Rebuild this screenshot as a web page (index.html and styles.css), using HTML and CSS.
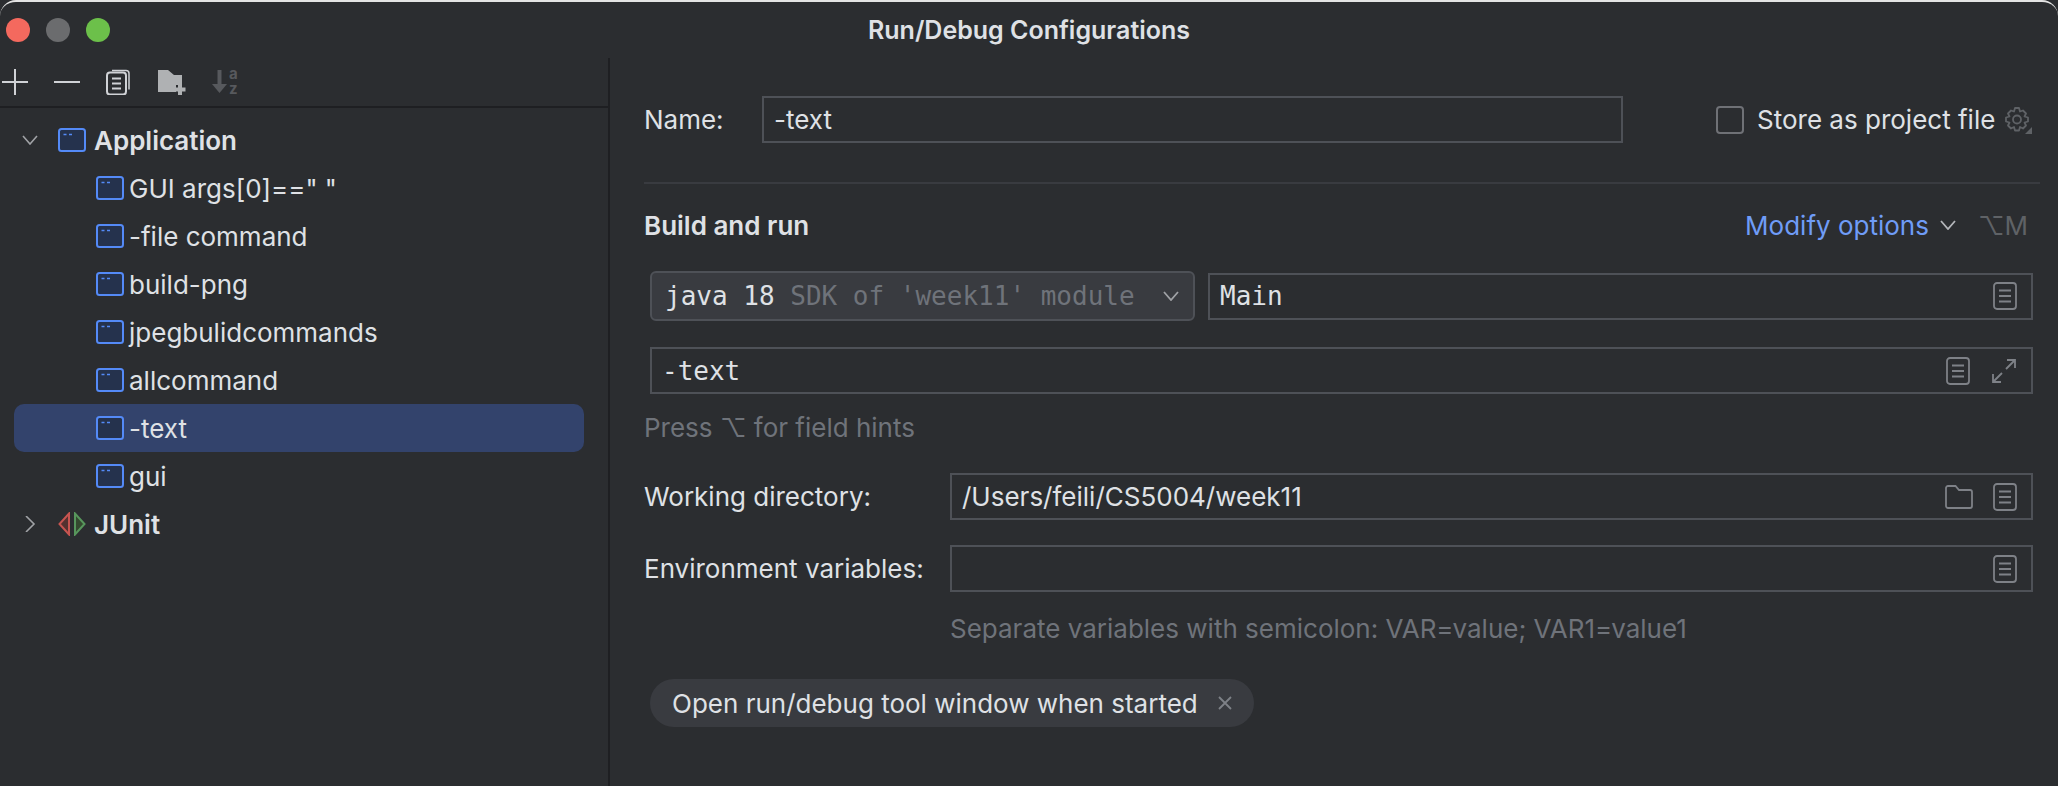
FILE: index.html
```html
<!DOCTYPE html>
<html lang="en">
    <head>
        <title>Run/Debug Configurations</title>
        <link rel="stylesheet" href="styles.css">
    </head>

    <body>
        <svg class="defs" width="0" height="0">
            <symbol id="app" viewBox="0 0 28 24">
                <rect x="1" y="1" width="26" height="22" rx="2.5" fill="#25324d" stroke="#548af7" stroke-width="2"/>
                <path d="M5.5 6.5h3M11 6.5h3" stroke="#548af7" stroke-width="1.6" fill="none"/>
            </symbol>
            <symbol id="doc" viewBox="0 0 24 28">
                <rect x="1" y="1" width="22" height="26" rx="3" fill="none" stroke="#7e8187" stroke-width="1.8"/>
                <path d="M6 8.5h12M6 14h12M6 19.5h12" stroke="#7e8187" stroke-width="1.8" fill="none"/>
            </symbol>
        </svg>

        <div class="window">
            <header class="titlebar">
                <div class="lights">
                    <span class="light red"></span>
                    <span class="light gray"></span>
                    <span class="light green"></span>
                </div>
                <div class="title">Run/Debug Configurations</div>
                <div></div>
            </header>

            <div class="main">
                <aside class="sidebar">
                    <div class="toolbar">
                        <svg class="tool" width="26" height="26" viewBox="0 0 26 26"><path d="M13 0v26M0 13h26" stroke="#d0d2d6" stroke-width="2" fill="none"/></svg>
                        <svg class="tool" width="26" height="26" viewBox="0 0 26 26"><path d="M0 13h26" stroke="#d0d2d6" stroke-width="2" fill="none"/></svg>
                        <svg class="tool" width="26" height="26" viewBox="0 0 26 26">
                            <path d="M6 1.5h14a3 3 0 0 1 3 3v16" stroke="#d0d2d6" stroke-width="1.5" fill="none"/>
                            <rect x="1" y="3.5" width="19" height="22" rx="3" fill="#2b2d30" stroke="#d0d2d6" stroke-width="2"/>
                            <path d="M6 9.5h9M6 14.5h9M6 19.5h9" stroke="#d0d2d6" stroke-width="2" fill="none"/>
                        </svg>
                        <svg class="tool" width="28" height="26" viewBox="0 0 28 26">
                            <path d="M0 1h10l6 5h8v10h-6v7H0z" fill="#afb1b3"/>
                            <path d="M22 15v11M16.500 20.500h11" stroke="#afb1b3" stroke-width="4" fill="none"/>
                        </svg>
                        <svg class="tool" width="26" height="26" viewBox="0 0 26 26">
                            <path d="M7.500 1v18" stroke="#57595d" stroke-width="4" fill="none"/>
                            <path d="M0 15h15l-7.500 9z" fill="#57595d"/>
                            <text x="17" y="10" class="sort-letter">a</text>
                            <text x="17" y="25" class="sort-letter">z</text>
                        </svg>
                    </div>

                    <div class="tree">
                        <div class="row group">
                            <svg class="arrow" width="16" height="10" viewBox="0 0 16 10"><path d="M1 1l7 8 7-8" stroke="#a0a2a6" stroke-width="1.600" fill="none"/></svg>
                            <svg class="icon" width="28" height="24"><use href="#app"/></svg>
                            <span>Application</span>
                        </div>
                        <div class="row child"><svg class="icon" width="28" height="24"><use href="#app"/></svg><span>GUI args[0]==" "</span></div>
                        <div class="row child"><svg class="icon" width="28" height="24"><use href="#app"/></svg><span>-file command</span></div>
                        <div class="row child"><svg class="icon" width="28" height="24"><use href="#app"/></svg><span>build-png</span></div>
                        <div class="row child"><svg class="icon" width="28" height="24"><use href="#app"/></svg><span>jpegbulidcommands</span></div>
                        <div class="row child"><svg class="icon" width="28" height="24"><use href="#app"/></svg><span>allcommand</span></div>
                        <div class="row child selected"><svg class="icon" width="28" height="24"><use href="#app"/></svg><span>-text</span></div>
                        <div class="row child"><svg class="icon" width="28" height="24"><use href="#app"/></svg><span>gui</span></div>
                        <div class="row group">
                            <svg class="arrow" width="16" height="16" viewBox="0 0 16 16"><path d="M4 0l8 8-8 8" stroke="#a0a2a6" stroke-width="1.600" fill="none"/></svg>
                            <svg class="icon" width="28" height="24" viewBox="0 0 28 24">
                                <path d="M11 1.500v21L1.500 12z" fill="#55312f" stroke="#c75450" stroke-width="2"/>
                                <path d="M17 1.500v21L26.500 12z" fill="#34492f" stroke="#57965c" stroke-width="2"/>
                            </svg>
                            <span>JUnit</span>
                        </div>
                    </div>
                </aside>

                <section class="form">
                    <div class="name-row">
                        <label class="label name-label">Name:</label>
                        <div class="field name-field">-text</div>
                        <span class="checkbox"></span>
                        <span class="store-text">Store as project file</span>
                        <svg class="gear" width="28" height="28" viewBox="0 0 28 28">
                            <path d="M11 2h4l1 3.500 3-1 3 3-1.500 3 3.500 1v4l-3.500 1 1.500 3-3 3-3-1.500-1 3.500h-4l-1-3.500-3 1.500-3-3 1.500-3L2 15.500v-4l3.500-1L4 7.500l3-3 3 1z" fill="none" stroke="#5f6266" stroke-width="1.800" stroke-linejoin="round"/>
                            <circle cx="13" cy="13.500" r="4" fill="none" stroke="#5f6266" stroke-width="1.800"/>
                            <path d="M28 21v7h-7z" fill="#5f6266"/>
                        </svg>
                    </div>

                    <div class="divider"></div>

                    <div class="section-head">
                        <span class="section-title">Build and run</span>
                        <div class="modify">
                            <span class="modify-link">Modify options</span>
                            <svg width="16" height="10" viewBox="0 0 16 10"><path d="M1 1l7 8 7-8" stroke="#b4b6ba" stroke-width="1.800" fill="none"/></svg>
                            <span class="shortcut">⌥M</span>
                        </div>
                    </div>

                    <div class="java-row">
                        <div class="combo">
                            <span class="mono">java 18 <span class="mono-dim">SDK of 'week11' module</span></span>
                            <svg width="16" height="10" viewBox="0 0 16 10"><path d="M1 1l7 8 7-8" stroke="#a0a2a6" stroke-width="1.800" fill="none"/></svg>
                        </div>
                        <div class="field main-field mono">
                            <span>Main</span>
                            <svg class="field-icon" width="24" height="28"><use href="#doc"/></svg>
                        </div>
                    </div>

                    <div class="field args-field mono">
                        <span>-text</span>
                        <svg class="field-icon" width="24" height="28"><use href="#doc"/></svg>
                        <svg class="field-icon expand" width="24" height="24" viewBox="0 0 24 24">
                            <path d="M14 10l9-9M15 1h8v8M10 14l-9 9M1 15v8h8" stroke="#7e8187" stroke-width="1.800" fill="none"/>
                        </svg>
                    </div>

                    <div class="hint">Press ⌥ for field hints</div>

                    <div class="form-row">
                        <label class="label">Working directory:</label>
                        <div class="field path-field">
                            <span>/Users/feili/CS5004/week11</span>
                            <svg class="field-icon" width="28" height="24" viewBox="0 0 28 24">
                                <path d="M3 1h7.500l3.500 4h11a2 2 0 0 1 2 2v14a2 2 0 0 1-2 2H3a2 2 0 0 1-2-2V3a2 2 0 0 1 2-2z" fill="none" stroke="#7e8187" stroke-width="1.800"/>
                            </svg>
                            <svg class="field-icon doc-last" width="24" height="28"><use href="#doc"/></svg>
                        </div>
                    </div>

                    <div class="form-row env-row">
                        <label class="label">Environment variables:</label>
                        <div class="field path-field">
                            <svg class="field-icon" width="24" height="28"><use href="#doc"/></svg>
                        </div>
                    </div>

                    <div class="hint env-hint">Separate variables with semicolon: VAR=value; VAR1=value1</div>

                    <div class="chip">
                        <span>Open run/debug tool window when started</span>
                        <svg width="14" height="14" viewBox="0 0 14 14"><path d="M1 1l12 12M13 1L1 13" stroke="#7e8187" stroke-width="1.800" fill="none"/></svg>
                    </div>
                </section>
            </div>
        </div>
    </body>
</html>
```

FILE: styles.css
```css
* {
    box-sizing: border-box;
}

html, body {
    margin: 0;
    height: 100%;
    background-color: #2b2d30;
}

body {
    font-family: "Inter", "Liberation Sans", sans-serif;
    font-size: 26px;
    color: #dfe1e5;
    overflow: hidden;
}

.defs {
    display: none;
}

.window {
    height: 786px;
    border-top: 2px solid #e4e4e4;
    border-radius: 16px 16px 0 0;
    display: flex;
    flex-direction: column;
}

.titlebar {
    height: 56px;
    flex: none;
    display: grid;
    grid-template-columns: 1fr auto 1fr;
    align-items: center;
}

.lights {
    display: flex;
    gap: 16px;
    padding-left: 6px;
}

.light {
    width: 24px;
    height: 24px;
    border-radius: 50%;
}

.red { background-color: #f4695e; }
.gray { background-color: #6b6c6e; }
.green { background-color: #6cc04a; }

.title {
    font-weight: 600;
    font-size: 25px;
    color: #dfe1e5;
}

.main {
    flex: 1;
    display: flex;
}

.sidebar {
    width: 610px;
    flex: none;
    border-right: 2px solid #1e1f22;
}

.toolbar {
    height: 50px;
    display: flex;
    align-items: center;
    padding-left: 2px;
    gap: 26px;
    border-bottom: 2px solid #1e1f22;
}

.sort-letter {
    font-size: 15px;
    font-weight: 700;
    fill: #57595d;
}

.tree {
    padding: 8px 24px 0 14px;
}

.row {
    height: 48px;
    display: flex;
    align-items: center;
    border-radius: 10px;
}

.group {
    font-weight: 600;
    padding-left: 8px;
}

.arrow {
    margin-right: 20px;
}

.group .icon {
    margin-right: 8px;
}

.child {
    padding-left: 82px;
}

.child .icon {
    margin-right: 5px;
}

.selected {
    background-color: #33436c;
}

.form {
    flex: 1;
    padding: 38px 25px 0 34px;
}

.name-row {
    height: 47px;
    display: flex;
    align-items: center;
}

.label {
    width: 306px;
    flex: none;
}

.name-label {
    width: 118px;
}

.field {
    height: 47px;
    display: flex;
    align-items: center;
    border: 2px solid #4e5157;
    padding-left: 10px;
}

.name-field {
    width: 861px;
}

.checkbox {
    width: 28px;
    height: 28px;
    margin-left: 93px;
    border: 2px solid #6f7176;
    border-radius: 4px;
}

.store-text {
    margin-left: 13px;
}

.gear {
    margin-left: 9px;
}

.divider {
    height: 2px;
    margin: 39px -7px 0 0;
    background-color: #393b40;
}

.section-head {
    height: 40px;
    margin-top: 21px;
    padding-right: 5px;
    display: flex;
    align-items: center;
    justify-content: space-between;
}

.section-title {
    font-weight: 600;
}

.modify {
    display: flex;
    align-items: center;
}

.modify-link {
    color: #6f9cf7;
}

.modify svg {
    margin-left: 11px;
}

.shortcut {
    margin-left: 22px;
    color: #5f6266;
}

.java-row {
    margin: 26px 0 0 6px;
    display: flex;
    align-items: center;
}

.combo {
    width: 545px;
    height: 50px;
    flex: none;
    display: flex;
    align-items: center;
    justify-content: space-between;
    padding: 0 14px 0 13px;
    background-color: #393b40;
    border: 2px solid #4e5157;
    border-radius: 6px;
}

.mono {
    font-family: "DejaVu Sans Mono", "Liberation Mono", monospace;
    font-size: 26px;
}

.mono-dim {
    color: #6f737a;
}

.main-field {
    flex: 1;
    margin-left: 13px;
}

.field-icon {
    margin-left: auto;
}

.main-field .field-icon,
.path-field .field-icon:last-child {
    margin-right: 14px;
}

.args-field {
    margin: 26px 0 0 6px;
}

.expand {
    margin-left: 22px;
    margin-right: 15px;
}

.hint {
    height: 30px;
    line-height: 30px;
    margin-top: 19px;
    color: #6f737a;
}

.form-row {
    margin-top: 30px;
    display: flex;
    align-items: center;
}

.env-row {
    margin-top: 25px;
}

.path-field {
    flex: 1;
}

.doc-last {
    margin-left: 20px;
}

.env-hint {
    margin: 22px 0 0 306px;
}

.chip {
    width: 604px;
    height: 48px;
    margin: 35px 0 0 6px;
    padding-left: 22px;
    display: flex;
    align-items: center;
    gap: 20px;
    background-color: #393b40;
    border-radius: 24px;
}
```
